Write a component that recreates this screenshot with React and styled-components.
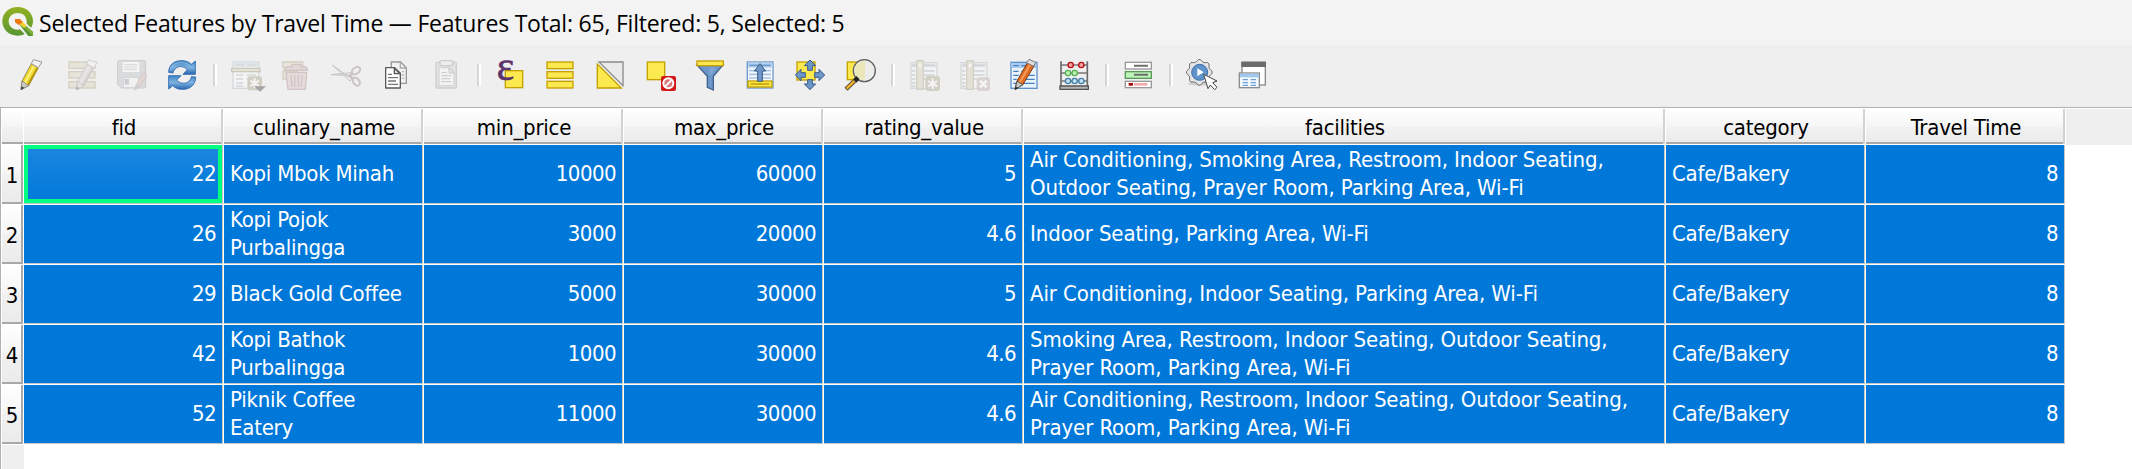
import React from "react";
import styled, { createGlobalStyle, css } from "styled-components";

const GlobalStyle = createGlobalStyle`
  * { box-sizing: border-box; }
  body { margin: 0; background: #fff; }
`;

const Window = styled.div`
  width: 2132px;
  height: 469px;
  display: flex;
  flex-direction: column;
  overflow: hidden;
  background: #efefef;
`;

const TitleBar = styled.header`
  height: 45px;
  flex: none;
  display: flex;
  align-items: center;
  gap: 5px;
  padding-left: 2px;
  background: #f3f3f3;
`;

const Logo = styled.svg`
  width: 32px;
  height: 32px;
  margin-bottom: 1px;
`;

const Title = styled.h1`
  margin: 0;
  padding-top: 1px;
  font: 400 23px/32px "Open Sans", "Noto Sans", sans-serif;
  letter-spacing: -0.21px;
  color: #000;
  white-space: nowrap;
`;

const Toolbar = styled.nav`
  height: 62px;
  flex: none;
  display: flex;
  align-items: center;
  padding: 0 7px 2px;
  background: #efefef;
`;

const ToolButton = styled.button`
  width: 50px;
  height: 50px;
  padding: 0;
  border: 0;
  background: none;
  display: grid;
  place-items: center;
  opacity: ${(p) => (p.$muted ? 0.36 : 1)};
`;

const IconSvg = styled.svg`
  width: 32px;
  height: 32px;
  overflow: visible;
`;

const Separator = styled.span`
  width: 4px;
  height: 22px;
  margin: 0 4px 0 6px;
  background: linear-gradient(to right, #d6d6d6 50%, #fff 50%);
`;

const Frame = styled.main`
  flex: 1;
  border-top: 1px solid #b2b2b2;
  border-left: 1px solid #b2b2b2;
  padding: 1px 0 0 1px;
  background: #fff;
  display: flex;
  flex-direction: column;
`;

const tableFont = css`
  font-family: "DejaVu Sans Condensed", "DejaVu Sans", sans-serif;
  font-stretch: condensed;
  font-size: 22px;
  line-height: 28px;
  letter-spacing: -0.16px;
`;

const Row = styled.div`
  display: grid;
  flex: none;
  grid-template-columns: 22px repeat(5, 200px) 642px 200px 200px 1fr;
  grid-auto-rows: ${(p) => (p.$header ? "36px" : "60px")};
`;

const raised = css`
  background: linear-gradient(#ffffff, #f5f5f5 50%, #f1f1f1 51%, #ebebeb);
  color: #000;
`;

const HeadCell = styled.div`
  ${tableFont}
  ${raised}
  display: flex;
  align-items: center;
  justify-content: center;
  padding: 3px 0 0 3px;
  border-right: ${(p) => (p.$plain ? 0 : 2)}px solid #d2d2d2;
  box-shadow: inset 0 -2px #a9a9a9;
  margin: 0 1px 1px 0;
  letter-spacing: -0.24px;
`;

const HeadFill = styled.div`
  background: #efefef;
`;

const RowNumber = styled.div`
  ${tableFont}
  ${raised}
  display: flex;
  align-items: center;
  justify-content: center;
  padding: 5px 0 0 1px;
  margin: 0 1px 1px 0;
  border-right: 2px solid #a9a9a9;
  border-bottom: 2px solid #a9a9a9;
`;

const Cell = styled.div`
  ${tableFont}
  display: flex;
  align-items: center;
  justify-content: ${(p) => (p.$number ? "flex-end" : "flex-start")};
  letter-spacing: ${(p) => (p.$number ? "-0.55px" : p.$long ? "-0.1px" : "-0.24px")};
  padding: 0 6px;
  margin: 0 1px 1px 0;
  border-right: 1px solid #c6c6c6;
  border-bottom: 1px solid #c6c6c6;
  background: #0078d9;
  color: #fff;
`;

const CurrentCell = styled(Cell)`
  background: linear-gradient(#1c87e0, #0078d9) padding-box;
  box-shadow: inset 0 0 0 4px #00ff80;
`;

const BodyFill = styled.div`
  flex: 1;
  width: 22px;
  background: #efefef;
`;

/* Icons are drawn on a 96-unit grid. */
const Icon = ({ children }) => <IconSvg viewBox="0 0 96 96">{children}</IconSvg>;

const Pencil = ({ body = "#f0d52e", dark = "#b59410", lite = "#fff27a", edge = "#6b6b3a" }) => (
  <g strokeLinejoin="round">
    <path d="M15 92 18 66 46 14 67 26 38 80Z" fill={body} stroke={edge} strokeWidth="2" />
    <path d="M24 70 51 20 56 23 29 74Z" fill={lite} />
    <path d="M33 77 62 26 67 28 38 80Z" fill={dark} />
    <path d="M15 92 18 66 24 69 29 74 38 80Z" fill="#c9c9c4" stroke="#777" strokeWidth="2" />
    <path d="M15 93 16 82 25 86Z" fill="#444" />
    <path d="M46 14 52 2 78 9 67 26Z" fill="#f2f2f2" stroke="#999" strokeWidth="3" />
  </g>
);

const EditIcon = () => (
  <Icon>
    <Pencil />
  </Icon>
);

const MultiEditIcon = () => (
  <Icon>
    <g fill="#d8d3b4" stroke="#a29b73" strokeWidth="4">
      <rect x="9" y="9" width="78" height="19" />
      <rect x="9" y="38" width="78" height="19" />
      <rect x="9" y="68" width="78" height="19" />
    </g>
    <g transform="translate(16 1)">
      <Pencil body="#c9c0bc" dark="#9b9494" lite="#ded6d2" edge="#888" />
    </g>
  </Icon>
);

const SaveIcon = () => (
  <Icon>
    <path d="M10 5H84Q89 5 89 10V83Q89 87 84 87H16L5 76V10Q5 5 10 5Z" fill="#b3b9bf" stroke="#8c8f94" strokeWidth="3" />
    <rect x="20" y="9" width="50" height="30" fill="#fff" />
    <path d="M25 17H63M25 24H63M25 31H63" stroke="#aaa" strokeWidth="3" />
    <rect x="22" y="56" width="46" height="30" fill="#f5f5f5" stroke="#9a9a9a" strokeWidth="2" />
    <rect x="26" y="60" width="13" height="17" fill="#8d949d" />
    <path d="M55 94 61 76 82 40 93 47 72 82Z" fill="#c9a7a0" stroke="#8b8080" strokeWidth="2" />
    <path d="M55 94 61 76 72 82Z" fill="#999" />
  </Icon>
);

const RefreshIcon = () => (
  <Icon>
    <defs>
      <linearGradient id="sync" x1="0" y1="0" x2="0" y2="1">
        <stop offset="0" stopColor="#3f86c4" />
        <stop offset=".5" stopColor="#7fb3e0" />
        <stop offset="1" stopColor="#2765b0" />
      </linearGradient>
    </defs>
    <g fill="url(#sync)" stroke="#2463ad" strokeWidth="2.5" strokeLinejoin="round">
      <path d="M8 40C8 15 28 4 48 5C60 5 69 9 76 16L88 6V46H51L64 32C55 22 39 20 31 27C25 31 22 36 21 42Z" />
      <path d="M89 54C89 80 69 92 48 91C37 91 27 87 20 80L8 90V50H45L32 63C41 74 57 75 66 69C72 65 75 60 76 53Z" />
    </g>
    <path d="M14 35C17 17 33 9 48 10C60 11 67 15 75 23" fill="none" stroke="#8bb9e2" strokeWidth="4" opacity=".6" />
  </Icon>
);

const AddRowIcon = () => (
  <Icon>
    <rect x="9" y="9" width="77" height="79" fill="#fdfdfd" stroke="#aab2ba" strokeWidth="4" />
    <rect x="11" y="11" width="73" height="13" fill="#cbdcec" />
    <path d="M18 18H42M52 18H78M18 48H40M50 48H78M18 60H40M50 60H78M18 72H40M18 81H40" stroke="#a8b0b8" strokeWidth="4" />
    <rect x="5" y="28" width="85" height="10" fill="#d5cfae" stroke="#8c8560" strokeWidth="4" />
    <rect x="52" y="52" width="44" height="42" rx="8" fill="#9f9878" />
    <path d="M74 58V88M61 65 87 81M87 65 61 81" stroke="#fff" strokeWidth="6" />
    <path d="M72 82H108L90 98Z" fill="#222" />
  </Icon>
);

const DeleteIcon = () => (
  <Icon>
    <path d="M9 9H68V26H9ZM9 36H50V60H9Z" fill="#ddd6b8" stroke="#a29b73" strokeWidth="4" />
    <path d="M18 40H80L76 91H24Z" fill="#d5baba" stroke="#a07878" strokeWidth="4" />
    <path d="M33 47 36 84M44 47V84M55 47V84M67 47 63 84" stroke="#a07878" strokeWidth="4" />
    <path d="M14 34Q14 24 24 23H36V16H62V23H74Q82 24 82 34Z" fill="#ccacac" stroke="#a07878" strokeWidth="4" />
  </Icon>
);

const CutIcon = () => (
  <Icon>
    <path d="M8 19 66 60 60 66ZM3 47 64 41 64 50Z" fill="#e8e8e8" stroke="#777" strokeWidth="3" strokeLinejoin="round" />
    <g fill="none" stroke="#8f7678" strokeWidth="6">
      <ellipse cx="78" cy="35" rx="14" ry="9" transform="rotate(-38 78 35)" />
      <ellipse cx="79" cy="68" rx="9" ry="13" transform="rotate(-35 79 68)" />
    </g>
    <path d="M56 48 72 60M58 52 68 43" stroke="#8f7678" strokeWidth="6" />
  </Icon>
);

const CopyIcon = () => (
  <Icon>
    <path d="M34 9H62L79 26V73H34Z" fill="#f3f3f3" stroke="#999" strokeWidth="4" />
    <path d="M61 10V27H78" fill="none" stroke="#aaa" strokeWidth="4" />
    <path d="M65 38H73M65 48H73M65 58H73" stroke="#bbb" strokeWidth="4" />
    <path d="M17 26H44L61 43V87H17Z" fill="#fff" stroke="#5a5a5a" strokeWidth="4" strokeLinejoin="round" />
    <path d="M43 27V44H60Z" fill="#ddd" stroke="#5a5a5a" strokeWidth="4" strokeLinejoin="round" />
    <path d="M24 46H36M24 56H54M24 66H48M24 76H54" stroke="#777" strokeWidth="4" />
  </Icon>
);

const PasteIcon = () => (
  <Icon>
    <rect x="18" y="10" width="61" height="77" rx="3" fill="#cfcfcf" stroke="#959595" strokeWidth="4" />
    <rect x="30" y="5" width="38" height="15" rx="4" fill="#eee" stroke="#909090" strokeWidth="4" />
    <path d="M27 26H58L72 41V80H27Z" fill="#fbfbfb" stroke="#999" strokeWidth="3" />
    <path d="M57 26V42H72Z" fill="#ddd" stroke="#888" strokeWidth="3" />
    <path d="M34 41H50M34 50H64M34 59H60M34 68H64" stroke="#999" strokeWidth="4" />
  </Icon>
);

const Epsilon = styled.text`
  font: 400 124px "Liberation Serif", serif;
  fill: #5d336b;
  stroke: #5d336b;
  stroke-width: 2px;
`;

const ExpressionIcon = () => (
  <Icon>
    <rect x="34" y="35" width="52" height="51" fill="#fce94f" stroke="#c4a000" strokeWidth="4" />
    <Epsilon x="8" y="63">ε</Epsilon>
  </Icon>
);

const SelectAllIcon = () => (
  <Icon>
    <g fill="#fce94f" stroke="#c4a000" strokeWidth="4">
      <rect x="9" y="9" width="78" height="20" />
      <rect x="9" y="38" width="78" height="20" />
      <rect x="9" y="67" width="78" height="20" />
    </g>
  </Icon>
);

const InvertIcon = () => (
  <Icon>
    <path d="M15 9H87V80Z" fill="#eaeaea" stroke="#8b8b8b" strokeWidth="4" />
    <path d="M10 15V87H82Z" fill="#fce94f" stroke="#c4a000" strokeWidth="4" />
  </Icon>
);

const DeselectIcon = () => (
  <Icon>
    <rect x="10" y="9" width="52" height="53" fill="#fce94f" stroke="#c4a000" strokeWidth="4" />
    <rect x="51" y="51" width="45" height="45" rx="6" fill="#d3171b" />
    <circle cx="73" cy="73" r="15" fill="#d97b7d" stroke="#fff" strokeWidth="6" />
    <path d="M63 83 84 62" stroke="#fff" strokeWidth="6" />
  </Icon>
);

const FilterIcon = () => (
  <Icon>
    <path d="M9 18H87L58 52V93L40 85V52Z" fill="#6d97c8" stroke="#41648f" strokeWidth="4" />
    <path d="M46 26H66L52 48H46Z" fill="#7ea5d4" />
    <rect x="9" y="6" width="79" height="14" fill="#fce94f" stroke="#c4a000" strokeWidth="4" />
  </Icon>
);

const MoveTopIcon = () => (
  <Icon>
    <rect x="10" y="9" width="77" height="78" fill="#f5f9fd" stroke="#6e9bcd" strokeWidth="4" />
    <rect x="12" y="11" width="73" height="15" fill="#b5d3f0" />
    <path d="M16 19H80" stroke="#6e9bcd" strokeWidth="5" />
    <path d="M15 35H81M15 46H81M15 57H81" stroke="#a7c6e6" strokeWidth="5" />
    <rect x="12" y="66" width="72" height="18" fill="#fce94f" stroke="#c4a000" strokeWidth="4" />
    <path d="M20 75H76" stroke="#c4a000" strokeWidth="5" />
    <path d="M48 14 65 36H55V67H41V36H31Z" fill="#6d97c8" stroke="#3c5c85" strokeWidth="3" />
  </Icon>
);

const PanIcon = () => (
  <Icon>
    <rect x="9" y="9" width="54" height="54" fill="#fce94f" stroke="#c4a000" strokeWidth="4" />
    <g fill="#6d97c8" stroke="#3c5c85" strokeWidth="3" strokeLinejoin="round">
      <path d="M48 3 65 20H55V34H41V20H31Z" />
      <path d="M48 92 65 75H55V62H41V75H31Z" />
      <path d="M4 48 21 31V41H34V55H21V65Z" />
      <path d="M92 48 75 31V41H62V55H75V65Z" />
    </g>
  </Icon>
);

const ZoomIcon = () => (
  <Icon>
    <rect x="10" y="9" width="53" height="53" fill="#fce94f" stroke="#c4a000" strokeWidth="4" />
    <circle cx="61" cy="35" r="33" fill="#ececea" stroke="#5f5f5f" strokeWidth="4" />
    <path d="M63 6V62Q34 62 31 35Q33 10 63 6Z" fill="#ebe7b8" />
    <path d="M42 56 32 66" stroke="#222" strokeWidth="14" />
    <path d="M32 65 6 91" stroke="#554a33" strokeWidth="13" />
    <path d="M31 66 8 89" stroke="#f5b52e" strokeWidth="7" />
  </Icon>
);

const FieldTable = () => (
  <>
    <rect x="9" y="11" width="78" height="77" fill="#fafafa" stroke="#a9b0b8" strokeWidth="4" />
    <rect x="11" y="13" width="74" height="12" fill="#c9d6e2" />
    <path d="M12 19H24M48 19H80M12 36H22M48 36H80M12 48H22M48 48H80M12 60H22M48 60H56M12 72H22M12 82H22" stroke="#9ba4ae" strokeWidth="5" />
    <rect x="26" y="5" width="20" height="86" fill="#cfc8ae" stroke="#a49c7c" strokeWidth="4" />
    <rect x="32" y="14" width="8" height="11" fill="#fff" />
  </>
);

const NewFieldIcon = () => (
  <Icon>
    <FieldTable />
    <rect x="52" y="51" width="44" height="45" rx="8" fill="#a09a7e" />
    <path d="M74 58V90M60 66 88 82M88 66 60 82" stroke="#fff" strokeWidth="6" />
  </Icon>
);

const DeleteFieldIcon = () => (
  <Icon>
    <FieldTable />
    <rect x="56" y="55" width="40" height="41" rx="8" fill="#b4a3a1" />
    <path d="M66 65 86 85M86 65 66 85" stroke="#fff" strokeWidth="8" />
  </Icon>
);

const OrganizeIcon = () => (
  <Icon>
    <rect x="9" y="10" width="78" height="78" fill="#e9f3fc" stroke="#5e92cd" strokeWidth="4" />
    <rect x="11" y="12" width="74" height="15" fill="#a9cdf0" />
    <path d="M16 20H32M40 20H54M16 37H32M40 37H54M16 49H32M16 61H26M62 49H80M52 61H80M16 73H26M46 73H80" stroke="#477fbd" strokeWidth="4" />
    <path d="M21 90 27 66 60 8 80 18 44 78Z" fill="#df6a21" stroke="#7a3a14" strokeWidth="3" />
    <path d="M33 68 63 16 69 19 38 72Z" fill="#f79a58" />
    <path d="M21 92 27 66 44 77Z" fill="#c9c9c4" stroke="#555" strokeWidth="3" />
    <path d="M21 93 23 83 31 87Z" fill="#222" />
    <path d="M55 11 63 1 83 10 77 22Z" fill="#ddd" stroke="#777" strokeWidth="3" />
  </Icon>
);

const AbacusIcon = () => (
  <Icon>
    <path d="M9 7V84M88 7V84" stroke="#6a6a6a" strokeWidth="5" />
    <path d="M9 18H88M9 42H88M9 66H88" stroke="#777" strokeWidth="4" />
    <path d="M6 81H91V91H6Z" fill="#b5b5b5" stroke="#555" strokeWidth="4" />
    <g strokeWidth="4">
      <g fill="#f5a3a3" stroke="#b90f14">
        <circle cx="38" cy="18" r="8" />
        <circle cx="70" cy="18" r="8" />
      </g>
      <g fill="#bff2b5" stroke="#57b052">
        <circle cx="30" cy="42" r="8" />
        <circle cx="50" cy="42" r="8" />
      </g>
      <g fill="#bfe0f5" stroke="#457ea5">
        <circle cx="30" cy="66" r="8" />
        <circle cx="50" cy="66" r="8" />
        <circle cx="70" cy="66" r="8" />
      </g>
    </g>
  </Icon>
);

const ConditionalIcon = () => (
  <Icon>
    <rect x="10" y="10" width="78" height="20" fill="#fff" stroke="#9a9a9a" strokeWidth="4" />
    <rect x="10" y="38" width="78" height="20" fill="#bff5bb" stroke="#5a9a58" strokeWidth="4" />
    <rect x="10" y="67" width="78" height="19" fill="#fff" stroke="#9a9a9a" strokeWidth="4" />
    <path d="M36 20H78M36 47H78" stroke="#6e6e6e" strokeWidth="6" />
    <path d="M20 76H33" stroke="#a40000" strokeWidth="8" />
    <path d="M36 76H76" stroke="#f5aaaa" strokeWidth="8" />
  </Icon>
);

const cog = Array.from({ length: 40 }, (_, i) => {
  const r = [34, 38.5, 38.5, 34, 32][i % 5];
  const a = (i / 40) * Math.PI * 2 - Math.PI / 2 - 0.235;
  return `${(40 + r * Math.cos(a)).toFixed(1)},${(40 + r * Math.sin(a)).toFixed(1)}`;
}).join(" ");

const ActionIcon = () => (
  <Icon>
    <ellipse cx="40" cy="74" rx="34" ry="6" fill="#cfcfcf" />
    <polygon points={cog} fill="#e6e6e6" stroke="#6b6b6b" strokeWidth="3" strokeLinejoin="round" />
    <circle cx="41" cy="40" r="24" fill="#5f93cb" stroke="#3f6da5" strokeWidth="3" />
    <path d="M34 28V52L53 40Z" fill="#fff" />
    <path d="M53 46 93 66 80 71 93 85 86 92 73 78 66 89Z" fill="#fff" stroke="#444" strokeWidth="3" strokeLinejoin="round" />
  </Icon>
);

const DockIcon = () => (
  <Icon>
    <rect x="18" y="10" width="70" height="68" fill="#fff" stroke="#8a8a8a" strokeWidth="4" />
    <rect x="16" y="8" width="74" height="16" fill="#6b6b6b" />
    <rect x="10" y="42" width="60" height="44" fill="#f4f9fe" stroke="#8c8c8c" strokeWidth="4" />
    <rect x="12" y="44" width="56" height="11" fill="#9fc8ef" />
    <path d="M20 62H36M44 62H60M20 71H36M44 71H60M20 79H36M44 79H60" stroke="#6f9fd2" strokeWidth="4" />
  </Icon>
);

const tools = [
  [
    [EditIcon, "Toggle editing"],
    [MultiEditIcon, "Multi edit", true],
    [SaveIcon, "Save edits", true],
    [RefreshIcon, "Reload"],
  ],
  [
    [AddRowIcon, "Add feature", true],
    [DeleteIcon, "Delete selected", true],
    [CutIcon, "Cut", true],
    [CopyIcon, "Copy"],
    [PasteIcon, "Paste", true],
  ],
  [
    [ExpressionIcon, "Select by expression"],
    [SelectAllIcon, "Select all"],
    [InvertIcon, "Invert selection"],
    [DeselectIcon, "Deselect all"],
    [FilterIcon, "Filter"],
    [MoveTopIcon, "Move selection to top"],
    [PanIcon, "Pan to selection"],
    [ZoomIcon, "Zoom to selection"],
  ],
  [
    [NewFieldIcon, "New field", true],
    [DeleteFieldIcon, "Delete field", true],
    [OrganizeIcon, "Organize columns"],
    [AbacusIcon, "Field calculator"],
  ],
  [[ConditionalIcon, "Conditional formatting"]],
  [
    [ActionIcon, "Actions"],
    [DockIcon, "Dock"],
  ],
];

const columns = ["fid", "culinary_name", "min_price", "max_price", "rating_value", "facilities", "category", "Travel Time"];

const features = [
  [22, "Kopi Mbok Minah", 10000, 60000, 5, "Air Conditioning, Smoking Area, Restroom, Indoor Seating, Outdoor Seating, Prayer Room, Parking Area, Wi-Fi", "Cafe/Bakery", 8],
  [26, "Kopi Pojok Purbalingga", 3000, 20000, 4.6, "Indoor Seating, Parking Area, Wi-Fi", "Cafe/Bakery", 8],
  [29, "Black Gold Coffee", 5000, 30000, 5, "Air Conditioning, Indoor Seating, Parking Area, Wi-Fi", "Cafe/Bakery", 8],
  [42, "Kopi Bathok Purbalingga", 1000, 30000, 4.6, "Smoking Area, Restroom, Indoor Seating, Outdoor Seating, Prayer Room, Parking Area, Wi-Fi", "Cafe/Bakery", 8],
  [52, "Piknik Coffee Eatery", 11000, 30000, 4.6, "Air Conditioning, Restroom, Indoor Seating, Outdoor Seating, Prayer Room, Parking Area, Wi-Fi", "Cafe/Bakery", 8],
];

export default function App() {
  return (
    <Window>
      <GlobalStyle />
      <TitleBar>
        <Logo viewBox="0 0 96 96">
          <defs>
            <linearGradient id="ring" x1="0" y1="0" x2="0" y2="1">
              <stop offset="0" stopColor="#93b023" />
              <stop offset="1" stopColor="#589632" />
            </linearGradient>
          </defs>
          <path
            d="M47 3C73 3 93 21 93 45C93 54 90 61 87 65L74 53C76 33 64 21 48 21C32 21 20 31 20 46C20 61 32 71 46 71C49 71 52 71 54 70L68 84C62 88 55 89 47 89C20 89 1 70 1 46C1 21 21 3 47 3Z"
            fill="url(#ring)"
          />
          <path d="M54 58 66 54 93 78V90H79Z" fill="#589632" />
          <path d="M66 54 93 78V90L58 56Z" fill="#7fae3a" />
          <path d="M48 50 60 45 74 60 66 66Z" fill="#f5d22d" />
          <path d="M39 39H54L62 48 51 58 39 49Z" fill="#ee7913" />
        </Logo>
        <Title>Selected Features by Travel Time — Features Total: 65, Filtered: 5, Selected: 5</Title>
      </TitleBar>
      <Toolbar>
        {tools.map((group, g) => (
          <React.Fragment key={g}>
            {g > 0 && <Separator />}
            {group.map(([Glyph, label, muted]) => (
              <ToolButton key={label} aria-label={label} $muted={muted}>
                <Glyph />
              </ToolButton>
            ))}
          </React.Fragment>
        ))}
      </Toolbar>
      <Frame>
        <Row $header>
          <HeadCell $plain />
          {columns.map((name) => (
            <HeadCell key={name}>{name}</HeadCell>
          ))}
          <HeadFill />
        </Row>
        {features.map((values, r) => (
          <Row key={r}>
            <RowNumber>{r + 1}</RowNumber>
            {values.map((value, c) => {
              const Kind = r === 0 && c === 0 ? CurrentCell : Cell;
              return (
                <Kind key={c} $number={typeof value === "number"} $long={columns[c] === "facilities"}>
                  {value}
                </Kind>
              );
            })}
          </Row>
        ))}
        <BodyFill />
      </Frame>
    </Window>
  );
}
